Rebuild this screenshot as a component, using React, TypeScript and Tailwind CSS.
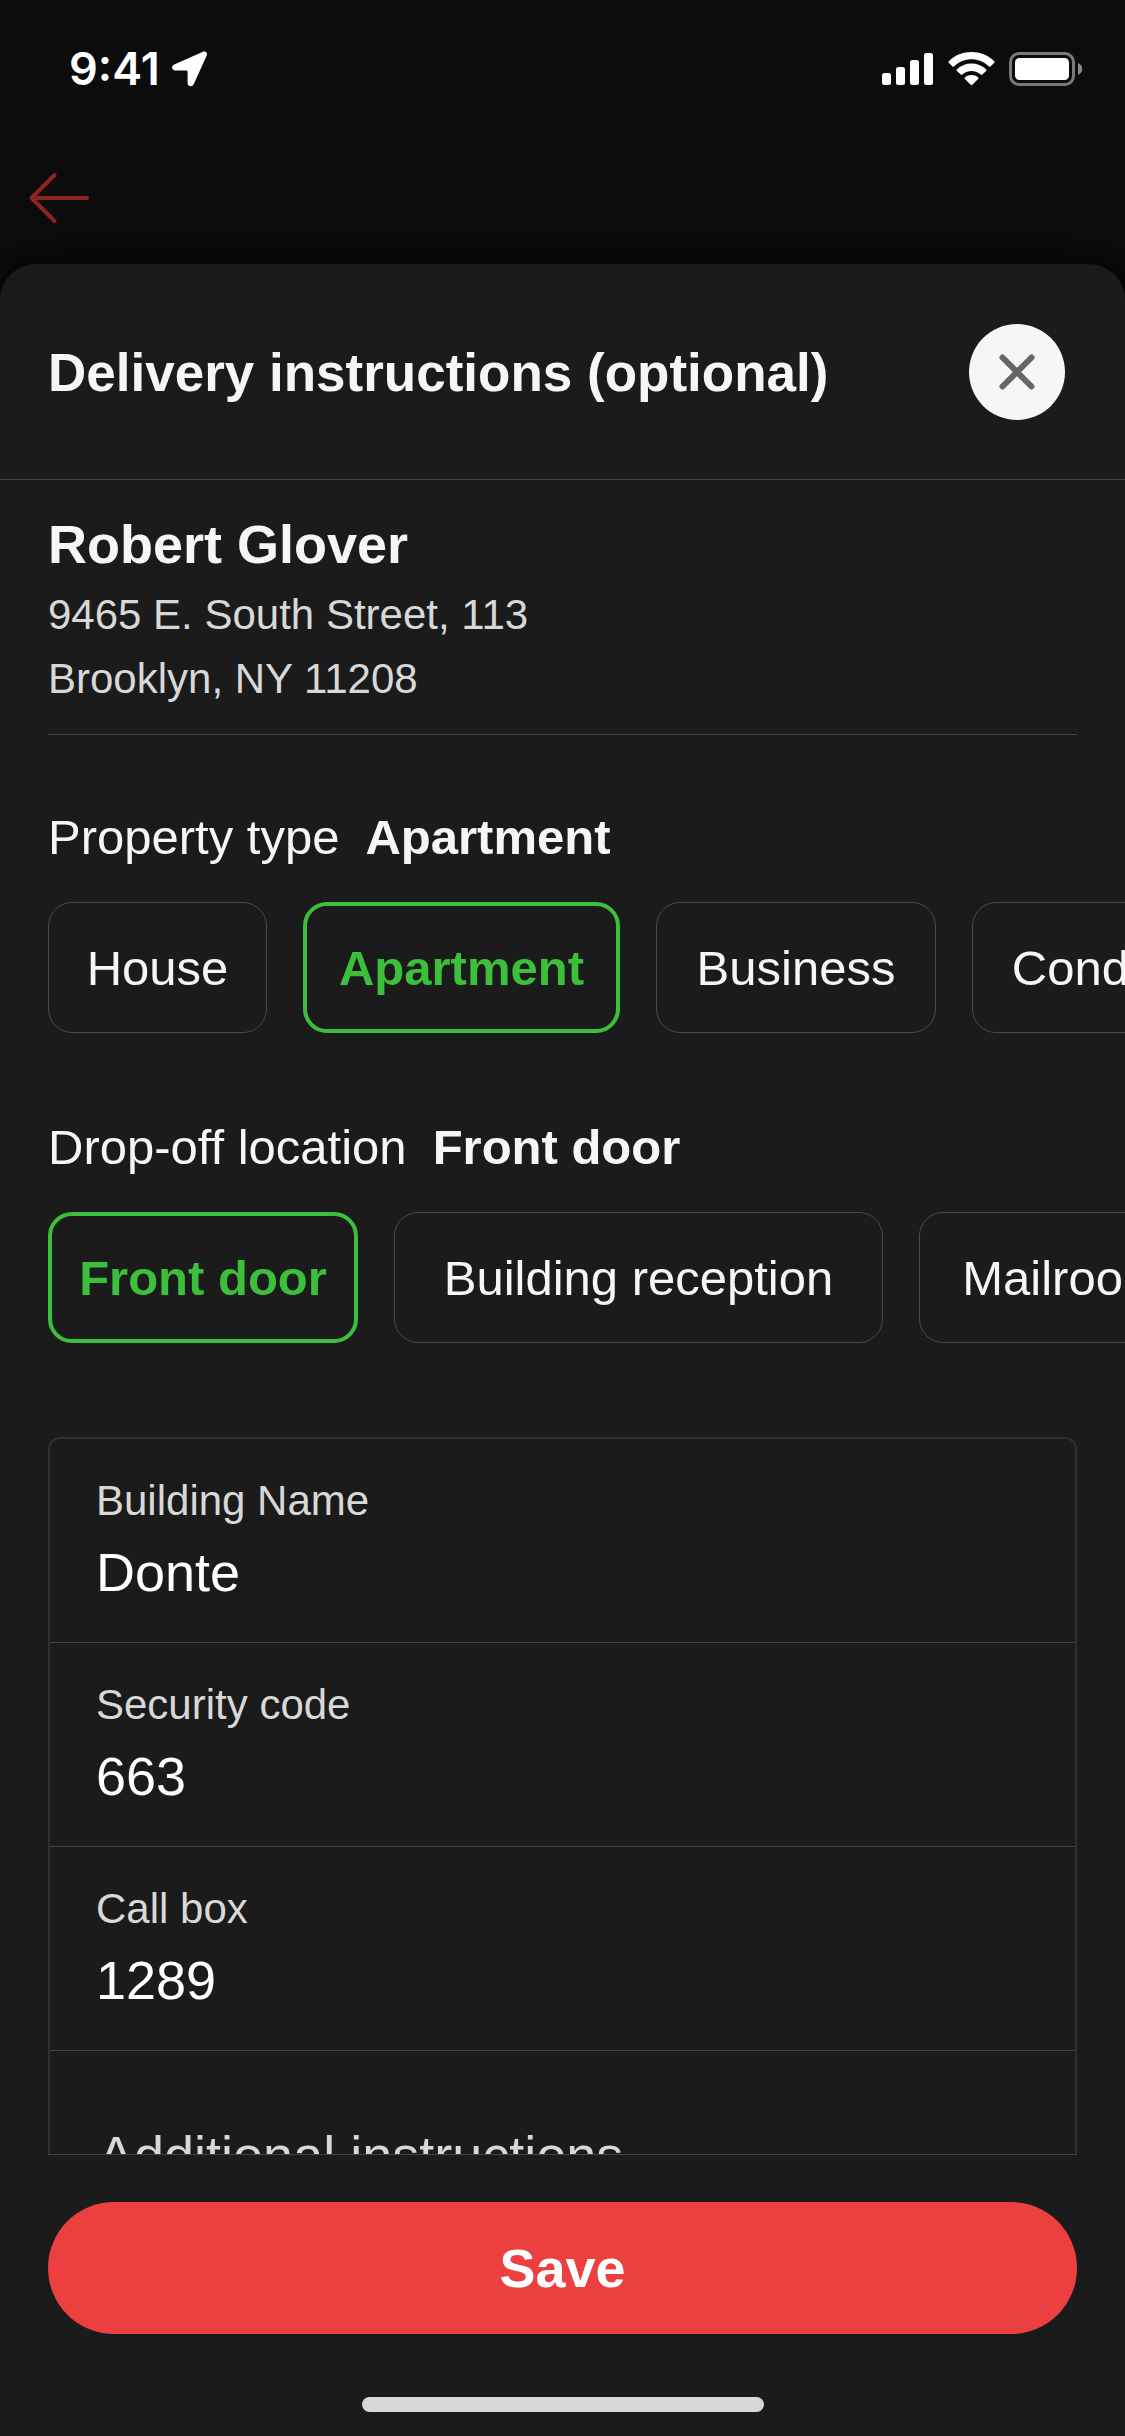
import React, { useState } from "react";
import clsx from "clsx";

interface Option {
  label: string;
  width: string;
}

const propertyTypes: Option[] = [
  { label: "House", width: "min-w-[219px]" },
  { label: "Apartment", width: "min-w-[317px]" },
  { label: "Business", width: "min-w-[280px]" },
  { label: "Condo", width: "min-w-[224px]" },
];

const dropOffLocations: Option[] = [
  { label: "Front door", width: "min-w-[310px]" },
  { label: "Building reception", width: "min-w-[489px]" },
  { label: "Mailroom", width: "min-w-[288px]" },
];

export default function App() {
  const [propertyType, setPropertyType] = useState("Apartment");
  const [dropOff, setDropOff] = useState("Front door");
  const [notes, setNotes] = useState("");

  return (
    <div className="flex h-screen w-full flex-col overflow-hidden bg-[#0c0c0c] font-['Liberation_Sans',Arial,sans-serif] text-[#f6f6f6]">
      <StatusBar />

      {/* Dimmed page behind the sheet */}
      <nav className="flex h-[132px] shrink-0 items-center px-7">
        <button type="button" aria-label="Back">
          <svg width="64" height="52" viewBox="0 0 64 52" fill="none" stroke="#8c2424" strokeWidth="4" strokeLinecap="round" strokeLinejoin="round">
            <path d="M59 26H4M26.500 3L3.500 26L26.500 49" />
          </svg>
        </button>
      </nav>

      <section className="flex min-h-0 flex-1 flex-col rounded-t-[36px] bg-[#1b1b1b] shadow-[0_0_40px_#000]">
        <header className="flex h-[216px] shrink-0 items-center justify-between border-b border-[#444] pr-[60px] pl-12">
          <h1 className="pt-0.5 text-[53px] leading-[64px] font-bold">Delivery instructions (optional)</h1>
          <button
            type="button"
            aria-label="Close"
            className="flex size-24 shrink-0 items-center justify-center rounded-full bg-[#f6f6f6]"
          >
            <svg width="36" height="36" viewBox="0 0 36 36" fill="none" stroke="#666" strokeWidth="6" strokeLinecap="round">
              <path d="M3.500 3.500L32.500 32.500M32.500 3.500L3.500 32.500" />
            </svg>
          </button>
        </header>

        <main className="min-h-0 flex-1 overflow-y-auto [scrollbar-width:none]">
          {/* Recipient */}
          <div className="mx-12 border-b border-[#444] pt-8 pb-[23px]">
            <h2 className="text-[54px] leading-[64px] font-bold">Robert Glover</h2>
            <address className="mt-[7px] text-[42px] leading-[64px] text-[#d8d8d8] not-italic">
              9465 E. South Street, 113
              <br />
              Brooklyn, NY 11208
            </address>
          </div>

          <div className="mt-[72px] flex flex-col gap-[84px]">
            <OptionGroup title="Property type" options={propertyTypes} value={propertyType} onChange={setPropertyType} />
            <OptionGroup title="Drop-off location" options={dropOffLocations} value={dropOff} onChange={setDropOff} />
          </div>

          {/* Details */}
          <form className="mx-12 mt-[94px] mb-12 rounded-xl border-2 border-[#303030]">
            <Field id="building" label="Building Name" initial="Donte" />
            <Field id="security" label="Security code" initial="663" />
            <Field id="callbox" label="Call box" initial="1289" />
            <textarea
              aria-label="Additional instructions"
              placeholder="Additional instructions"
              rows={3}
              value={notes}
              onChange={(e) => setNotes(e.target.value)}
              className="block w-full resize-none bg-transparent px-12 pt-[72px] pb-9 text-[54px] leading-[64px] placeholder-[#d8d8d8] outline-none"
            />
          </form>
        </main>

        <footer className="mx-12 flex shrink-0 flex-col items-center border-t border-[#444] pt-[47px] pb-6">
          <button
            type="button"
            className="h-[132px] w-full rounded-full bg-[#ec4040] text-[54px] leading-[64px] font-bold text-white"
          >
            Save
          </button>
          <div className="mt-[63px] h-[15px] w-[402px] rounded-full bg-[#d8d8d8]" />
        </footer>
      </section>
    </div>
  );
}

/** A titled row of chips that scrolls sideways. */
function OptionGroup({
  title,
  options,
  value,
  onChange,
}: {
  title: string;
  options: Option[];
  value: string;
  onChange: (label: string) => void;
}) {
  return (
    <div>
      <h3 className="flex gap-[26px] px-12 text-[49px] leading-[60px] font-normal">
        {title}
        <strong className="font-bold">{value}</strong>
      </h3>
      <div className="mt-[35px] flex gap-9 overflow-x-auto px-12 [scrollbar-width:none]">
        {options.map((o) => (
          <button
            key={o.label}
            type="button"
            aria-pressed={o.label === value}
            onClick={() => onChange(o.label)}
            className={clsx(
              "h-[131px] shrink-0 rounded-3xl text-[49px] leading-[60px] whitespace-nowrap",
              o.width,
              o.label === value
                ? "border-4 border-[#3cbf3a] font-bold text-[#3cbf3a]"
                : "border border-[#4a4a4a]"
            )}
          >
            {o.label}
          </button>
        ))}
      </div>
    </div>
  );
}

function Field({ id, label, initial }: { id: string; label: string; initial: string }) {
  const [value, setValue] = useState(initial);

  return (
    <div className="flex flex-col border-b border-[#444] px-[46px] pt-[38px] pb-[38px]">
      <label htmlFor={id} className="text-[42px] leading-[48px] text-[#d8d8d8]">
        {label}
      </label>
      <input
        id={id}
        type="text"
        value={value}
        onChange={(e) => setValue(e.target.value)}
        className="mt-[15px] h-16 w-full bg-transparent text-[54px] leading-[64px] text-white outline-none"
      />
    </div>
  );
}

function StatusBar() {
  return (
    <div className="flex h-[132px] shrink-0 items-center justify-between pt-1.5 pr-[42px] pl-[69px] text-white">
      <div className="flex items-center gap-3">
        <span className="font-[Inter,sans-serif] text-[45px] leading-[48px] font-semibold">9:41</span>
        <svg width="36" height="36" viewBox="0 0 36 36" fill="currentColor">
          <path d="M30.500 .9C33.500 -.5 36 1.800 34.600 4.800L21.700 33.200C20.300 36.300 15.600 35.600 15.600 31.900V20.700C15.600 20 15.200 19.600 14.500 19.600H3.300C-.3 19.600 -1 15 2.200 13.600Z" />
        </svg>
      </div>
      <div className="flex items-center gap-[14px]">
        <svg width="52" height="34" viewBox="0 0 52 34" fill="currentColor">
          <rect x="0" y="21" width="9" height="12" rx="2.500" />
          <rect x="14" y="15" width="9" height="18" rx="2.500" />
          <rect x="28" y="8" width="9" height="25" rx="2.500" />
          <rect x="42" y="1" width="9" height="32" rx="2.500" />
        </svg>
        <svg width="47" height="34" viewBox="0 0 47 34" fill="currentColor">
          <path d="M.8 9.200C13 -3 34 -3 46.200 9.200Q47 10 46.200 10.800L42.500 14.400Q41.700 15.100 40.900 14.400C31 5 16 5 6.100 14.400Q5.300 15.100 4.500 14.400L.8 10.800Q0 10 .8 9.200Z" />
          <path d="M8.900 17.300C17 9.400 30 9.400 38.100 17.300Q38.900 18.100 38.100 18.900L34.300 22.600Q33.500 23.300 32.700 22.600C27.500 17.900 19.500 17.900 14.300 22.600Q13.500 23.300 12.700 22.600L8.900 18.900Q8.100 18.100 8.900 17.300Z" />
          <path d="M17 25.300C20.700 22.200 26.300 22.200 30 25.300Q30.900 26.100 30.100 26.900L24.300 32.700Q23.500 33.500 22.700 32.700L16.900 26.900Q16.100 26.100 17 25.300Z" />
        </svg>
        <svg width="74" height="34" viewBox="0 0 74 34" fill="none">
          <rect x="1.500" y="1.500" width="63" height="31" rx="8.500" stroke="#7a7a7a" strokeWidth="3" />
          <rect x="6" y="6" width="54" height="22" rx="4.500" fill="#fff" />
          <path d="M69 11V23C71.500 22 73.200 19.700 73.200 17S71.500 12 69 11Z" fill="#8a8a8a" />
        </svg>
      </div>
    </div>
  );
}
